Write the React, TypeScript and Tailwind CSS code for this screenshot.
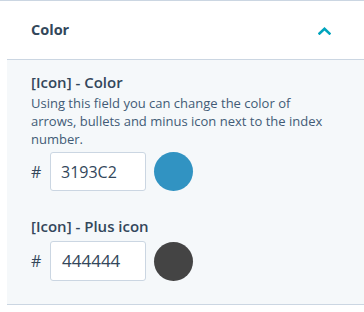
import React from "react";

const font = { fontFamily: '"Open Sans", "Noto Sans", sans-serif' };

export default function App() {
  return (
    <div className="w-[364px] h-[312px] bg-white text-[#33475b] overflow-hidden" style={font}>
      <div className="border-t border-[#cbd6e2]">
        <div className="flex items-center justify-between h-[58px] pl-[31px] pr-[33px]">
          <span className="text-[14.5px] font-bold text-[#33475b]">Color</span>
          <svg width="13" height="8" viewBox="0 0 13 8" className="mt-[2px]">
            <path d="M1.5 6.5 L6.5 1.8 L11.5 6.5" fill="none" stroke="#00a4bd" strokeWidth="2.6" strokeLinecap="square" />
          </svg>
        </div>
        <div className="ml-[7px] bg-[#f5f8fa] border-t border-b border-[#cbd6e2] pl-[24px] pr-[12px] pt-[12px] pb-[23px]">
          <div className="text-[15px] font-semibold leading-[20px]">[Icon] - Color</div>
          <p className="w-[296px] text-[13px] leading-[18px] mt-[2px] text-[#425b76]">
            Using this field you can change the color of arrows, bullets and minus icon next to the index number.
          </p>
          <div className="flex items-center mt-[4px]">
            <span className="w-[19px] text-[16px] text-[#33475b]">#</span>
            <div className="w-[96px] h-[39px] bg-white border border-[#cbd6e2] rounded-[3px] flex items-center pl-[10px] text-[16px] text-[#33475b]">3193C2</div>
            <div className="w-[39px] h-[39px] rounded-full bg-[#3193c2] ml-[8px]" />
          </div>
          <div className="text-[15px] font-semibold leading-[20px] mt-[25px]">[Icon] - Plus icon</div>
          <div className="flex items-center mt-[5px]">
            <span className="w-[19px] text-[16px] text-[#33475b]">#</span>
            <div className="w-[96px] h-[40px] bg-white border border-[#cbd6e2] rounded-[3px] flex items-center pl-[11px] text-[17px] text-[#33475b]">444444</div>
            <div className="w-[39px] h-[39px] rounded-full bg-[#444444] ml-[8px]" />
          </div>
        </div>
      </div>
    </div>
  );
}
